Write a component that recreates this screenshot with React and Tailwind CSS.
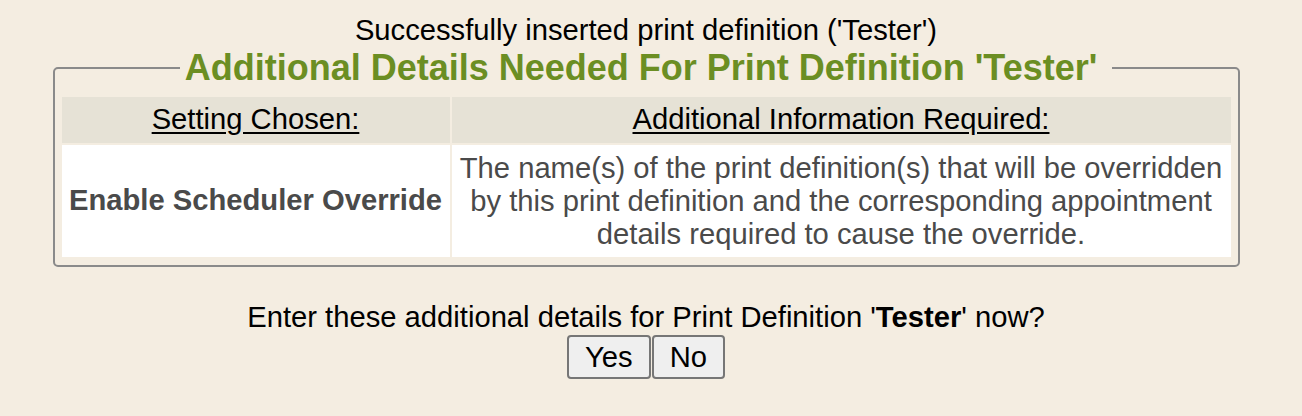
export default function App() {
  return (
    <div className="min-h-screen bg-[#f4ede1] font-['Liberation_Sans',Arial,sans-serif] text-black">
      <div className="w-[1292px] pt-[14px]">
        <div className="text-center text-[29.2px] leading-[33px]">
          Successfully inserted print definition ('Tester')
        </div>
        <fieldset className="mx-auto w-[1187px] rounded-[5px] border-2 border-[#8a8a8a] px-[7px] pb-[8px]">
          <legend className="mx-auto whitespace-pre px-[5px] text-[36px] font-bold leading-[41px] text-[#6b8e23]">
            {"Additional Details Needed For Print Definition 'Tester' "}
          </legend>
          <div className="mt-[9px] grid grid-cols-[388px_1fr] gap-[2px]">
            <div className="flex h-[46px] items-center justify-center bg-[#e6e2d6] text-[29.2px] underline underline-offset-[3px]">
              Setting Chosen:
            </div>
            <div className="flex h-[46px] items-center justify-center bg-[#e6e2d6] text-[29.2px] underline underline-offset-[3px]">
              Additional Information Required:
            </div>
            <div className="flex h-[112px] items-center justify-center bg-white text-[29.2px] font-bold text-[#4a4a4a]">
              Enable Scheduler Override
            </div>
            <div className="flex h-[112px] items-center justify-center bg-white px-2 text-center text-[29.2px] leading-[33px] text-[#4a4a4a]">
              The name(s) of the print definition(s) that will be overridden by this print definition and the corresponding appointment details required to cause the override.
            </div>
          </div>
        </fieldset>
        <div className="mt-[33px] text-center text-[29.2px] leading-[34px]">
          Enter these additional details for Print Definition '<b>Tester</b>' now?
        </div>
        <div className="mt-[1px] flex justify-center">
          <button className="h-[44px] rounded-[4px] border-2 border-[#767676] bg-[#efefef] px-[16px] text-[29.2px] leading-[33px]">
            Yes
          </button>
          <button className="ml-[1px] h-[44px] rounded-[4px] border-2 border-[#767676] bg-[#efefef] px-[16px] text-[29.2px] leading-[33px]">
            No
          </button>
        </div>
      </div>
    </div>
  )
}
